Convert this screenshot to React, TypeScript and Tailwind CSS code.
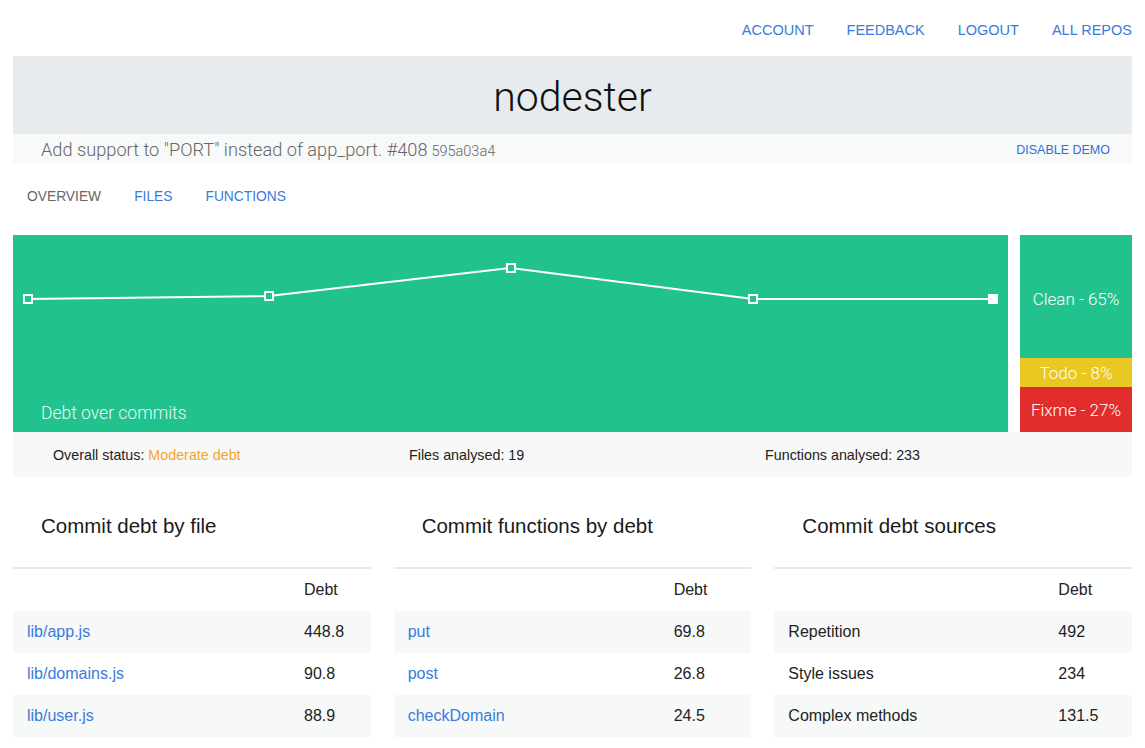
import React from "react";

const blue = "text-[#3a7bdb]";

type Row = { name: string; value: string; link?: boolean };

function DebtTable({
  title,
  rows,
  colClass,
}: {
  title: string;
  rows: Row[];
  colClass: string;
}) {
  return (
    <div>
      <div className="pl-[28px] pt-[35px] h-[90px] text-[20.5px] leading-[28px] text-[#1a1a1a]">
        {title}
      </div>
      <div className="border-t-2 border-[#e7e8e9]">
        <div className={`grid ${colClass} pl-[14px] h-[42px] items-center text-[16px] text-[#222]`}>
          <div />
          <div>Debt</div>
        </div>
        {rows.map((r, i) => (
          <div
            key={r.name}
            className={`grid ${colClass} pl-[14px] h-[42px] items-center text-[16px] ${
              i % 2 === 0 ? "bg-[#f7f9f9]" : "bg-white"
            }`}
          >
            <div className={r.link ? blue : "text-[#222]"}>{r.name}</div>
            <div className="text-[#222]">{r.value}</div>
          </div>
        ))}
      </div>
    </div>
  );
}

export default function App() {
  const pts: [number, number][] = [
    [15, 64],
    [256, 61],
    [498, 33],
    [740, 64],
    [980, 64],
  ];
  return (
    <div className="w-[1145px] bg-white font-['Liberation_Sans',Arial,sans-serif]">
      <div className="mx-[13px]">
        {/* top nav */}
        <div className="h-[56px] flex justify-end items-start pt-[20px] gap-[33px] text-[14.5px] leading-[20px] text-[#3a7bdb]">
          <span>ACCOUNT</span>
          <span>FEEDBACK</span>
          <span>LOGOUT</span>
          <span>ALL REPOS</span>
        </div>
        {/* header */}
        <div className="h-[78px] bg-[#e8ebee] flex items-center justify-center">
          <h1 className="text-[41px] font-['Roboto',sans-serif] font-light text-[#111] leading-none pt-[5px]">
            nodester
          </h1>
        </div>
        <div className="h-[29px] bg-[#f8f9f9] flex items-center justify-between pl-[28px] pr-[22px]">
          <div className="text-[#666] font-['Roboto',sans-serif] font-light pt-[5px] leading-[20px]">
            <span className="text-[18.2px]">Add support to "PORT" instead of app_port. #408</span>{" "}
            <span className="text-[14.5px]">595a03a4</span>
          </div>
          <span className="text-[12.5px] text-[#2f6fd8] pt-[4px]">DISABLE DEMO</span>
        </div>
        {/* tabs */}
        <div className="h-[72px] flex items-center pl-[14px] gap-[33px] text-[13.8px] pb-[4px]">
          <span className="text-[#666]">OVERVIEW</span>
          <span className={blue}>FILES</span>
          <span className={blue}>FUNCTIONS</span>
        </div>
        {/* chart */}
        <div className="flex h-[197px] gap-[12px]">
          <div className="relative flex-1 bg-[#22c28e]">
            <svg className="absolute inset-0" width="995" height="197">
              <polyline
                points={pts.map((p) => p.join(",")).join(" ")}
                fill="none"
                stroke="white"
                strokeWidth="2"
              />
              {pts.map(([x, y], i) =>
                i === pts.length - 1 ? (
                  <rect key={i} x={x - 5} y={y - 5} width="10" height="10" fill="white" />
                ) : (
                  <rect
                    key={i}
                    x={x - 4}
                    y={y - 4}
                    width="8"
                    height="8"
                    fill="#22c28e"
                    stroke="white"
                    strokeWidth="2"
                  />
                )
              )}
            </svg>
            <div className="absolute left-[28px] bottom-[6px] text-[17.5px] font-['Roboto',sans-serif] font-light text-white/90">
              Debt over commits
            </div>
          </div>
          <div className="w-[112px] flex flex-col text-white font-['Roboto',sans-serif] font-light text-[17px]">
            <div className="h-[123px] bg-[#22c28e] flex items-center justify-center pt-[6px]">Clean - 65%</div>
            <div className="h-[29px] bg-[#e9c821] flex items-center justify-center pt-[3px]">Todo - 8%</div>
            <div className="flex-1 bg-[#e22d2d] flex items-center justify-center pt-[3px]">Fixme - 27%</div>
          </div>
        </div>
        {/* status bar */}
        <div className="h-[45px] bg-[#f7f8f8] flex items-center pl-[40px] pt-[3px] text-[14.3px] text-[#222]">
          <div className="w-[356px]">
            Overall status: <span className="text-[#f5a52d]">Moderate debt</span>
          </div>
          <div className="w-[356px]">Files analysed: 19</div>
          <div>Functions analysed: 233</div>
        </div>
        {/* tables */}
        <div className="grid grid-cols-3 gap-[23px] pb-[12px]">
          <DebtTable
            title="Commit debt by file"
            colClass="grid-cols-[277px_1fr]"
            rows={[
              { name: "lib/app.js", value: "448.8", link: true },
              { name: "lib/domains.js", value: "90.8", link: true },
              { name: "lib/user.js", value: "88.9", link: true },
            ]}
          />
          <DebtTable
            title="Commit functions by debt"
            colClass="grid-cols-[266px_1fr]"
            rows={[
              { name: "put", value: "69.8", link: true },
              { name: "post", value: "26.8", link: true },
              { name: "checkDomain", value: "24.5", link: true },
            ]}
          />
          <DebtTable
            title="Commit debt sources"
            colClass="grid-cols-[270px_1fr]"
            rows={[
              { name: "Repetition", value: "492" },
              { name: "Style issues", value: "234" },
              { name: "Complex methods", value: "131.5" },
            ]}
          />
        </div>
      </div>
    </div>
  );
}
